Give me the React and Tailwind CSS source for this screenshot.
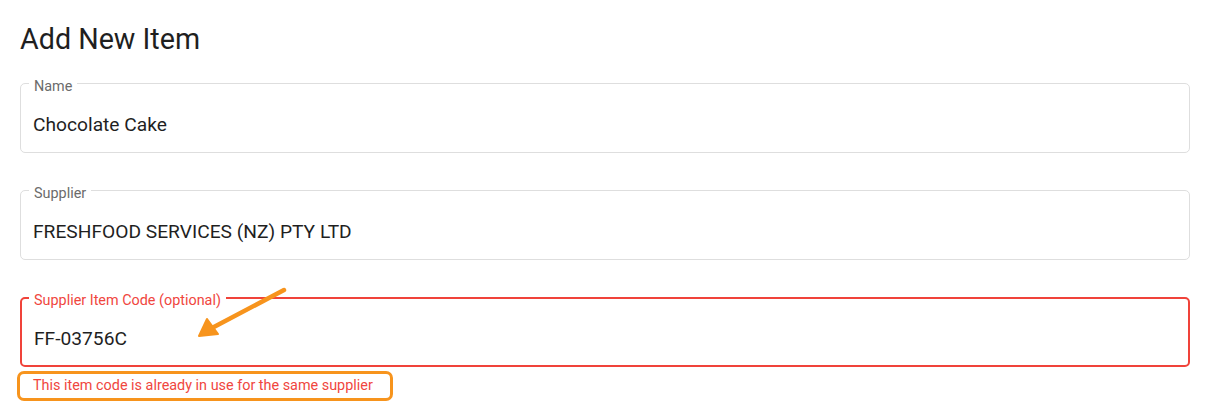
/**
 * Add New Item form — outlined text fields, error state on supplier item code.
 */

const FONT = { fontFamily: 'Roboto, "Liberation Sans", sans-serif' };

function OutlinedField({ label, value, error = false }) {
  return (
    <div
      className={
        'relative flex h-[70px] items-center rounded-[5px] bg-white pl-[12px] pt-[13px] ' +
        (error ? 'border-2 border-[#f0433a] pl-[11px]' : 'border border-[#dedede]')
      }
    >
      <span
        className={
          'absolute bg-white px-[5px] text-[14.4px] leading-none ' +
          (error ? '-top-[5px] left-[7px] text-[#f0463e]' : '-top-[4px] left-[8px] text-[#6b6b6b]')
        }
      >
        {label}
      </span>
      <span className="text-[19.2px] leading-none text-[#1f1f1f]">{value}</span>
    </div>
  );
}

export default function App() {
  return (
    <div className="min-h-[420px] bg-white px-[20px] pt-[21px]" style={FONT}>
      <h1 className="text-[28.7px] font-normal leading-[36px] text-[#1f1f1f]">Add New Item</h1>

      <div className="mt-[26px] w-[1170px]">
        <OutlinedField label="Name" value="Chocolate Cake" />
      </div>

      <div className="mt-[37px] w-[1170px]">
        <OutlinedField label="Supplier" value="FRESHFOOD SERVICES (NZ) PTY LTD" />
      </div>

      <div className="relative mt-[37px] w-[1170px]">
        <OutlinedField label="Supplier Item Code (optional)" value="FF-03756C" error />

        {/* annotation arrow */}
        <svg className="absolute left-[150px] -top-[14px]" width="130" height="70" viewBox="0 0 130 70" fill="none">
          <line x1="114" y1="7" x2="42" y2="45" stroke="#f7941d" strokeWidth="4.5" strokeLinecap="round" />
          <polygon points="29,53 37,36 48,51" fill="#f7941d" stroke="#f7941d" strokeWidth="2" strokeLinejoin="round" />
        </svg>
      </div>

      <div className="-ml-[3px] mt-[4px] w-[376px] rounded-[7px] border-[3px] border-[#f7941d] py-[3px] pl-[13px] text-[14.4px] leading-[18px] text-[#f0463e]">
        This item code is already in use for the same supplier
      </div>
    </div>
  );
}
